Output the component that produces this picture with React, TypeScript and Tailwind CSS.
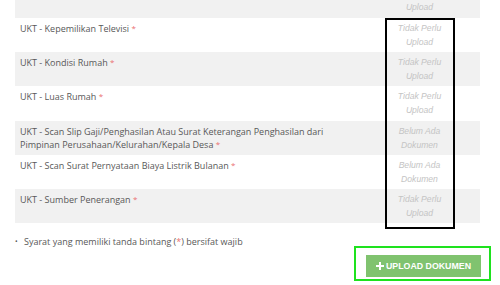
import React from "react";

const rows: { label: React.ReactNode; status: [string, string]; grey: boolean }[] = [
  { label: "UKT - Kepemilikan Televisi", status: ["Tidak Perlu", "Upload"], grey: false },
  { label: "UKT - Kondisi Rumah", status: ["Tidak Perlu", "Upload"], grey: true },
  { label: "UKT - Luas Rumah", status: ["Tidak Perlu", "Upload"], grey: false },
  {
    label: (
      <>
        UKT - Scan Slip Gaji/Penghasilan Atau Surat Keterangan Penghasilan dari
        <br />
        Pimpinan Perusahaan/Kelurahan/Kepala Desa
      </>
    ),
    status: ["Belum Ada", "Dokumen"],
    grey: true,
  },
  { label: "UKT - Scan Surat Pernyataan Biaya Listrik Bulanan", status: ["Belum Ada", "Dokumen"], grey: false },
  { label: "UKT - Sumber Penerangan", status: ["Tidak Perlu", "Upload"], grey: true },
];

function Row({ label, status, grey }: { label: React.ReactNode; status: [string, string]; grey: boolean }) {
  return (
    <div className={`flex h-[34.2px] ${grey ? "bg-[#f1f1f1]" : "bg-white"}`}>
      <div
        className="flex-1 pl-[5px] pt-[4px] text-[9px] leading-[13px] text-[#585858]"
        style={{ fontFamily: '"Open Sans", sans-serif' }}
      >
        {label} <span className="relative top-[-1px] text-[8px] text-[#ea6f6f]">*</span>
      </div>
      <div
        className="w-[69px] pt-[3px] text-center text-[8.6px] italic leading-[14px] text-[#c4c4c4]"
        style={{ fontFamily: '"Liberation Sans", Arial, sans-serif' }}
      >
        {status[0]}
        <br />
        {status[1]}
      </div>
      <div className="w-[26px]" />
    </div>
  );
}

export default function App() {
  return (
    <div className="relative h-[285px] w-[500px] overflow-hidden bg-white">
      <div className="ml-[15px] mr-[20px]">
        <div className="flex h-[18px] bg-[#f1f1f1]">
          <div className="flex-1" />
          <div
            className="w-[69px] text-center text-[8.6px] italic leading-[14px] text-[#c4c4c4]"
            style={{ fontFamily: '"Liberation Sans", Arial, sans-serif' }}
          >
            Upload
          </div>
          <div className="w-[26px]" />
        </div>
        {rows.map((r, i) => (
          <Row key={i} {...r} />
        ))}
      </div>

      <div
        className="mt-[13px] flex items-center pl-[15px] text-[9px] leading-[12px] text-[#585858]"
        style={{ fontFamily: '"Open Sans", sans-serif' }}
      >
        <span className="w-[9px] text-[7px]">•</span>
        <span>
          Syarat yang memiliki tanda bintang (<span className="text-[#ea6f6f]">*</span>) bersifat wajib
        </span>
      </div>

      <div className="mt-[7px] flex justify-end pr-[19px]">
        <div className="relative">
          <div className="absolute bottom-[-4px] left-[-12px] right-[-10px] top-[-9px] border-2 border-[#1ee21e]" />
          <button
            className="relative flex h-[22px] w-[115px] items-center justify-center gap-[2px] bg-[#80c36f] text-[8.8px] font-bold text-white"
            style={{ fontFamily: '"Liberation Sans", Arial, sans-serif' }}
          >
            <svg width="8" height="8" viewBox="0 0 8 8">
              <path d="M3 0h2v3h3v2H5v3H3V5H0V3h3z" fill="white" />
            </svg>
            UPLOAD DOKUMEN
          </button>
        </div>
      </div>

      <div className="absolute left-[385px] top-[18px] h-[211px] w-[70px] border-2 border-black" />
    </div>
  );
}
